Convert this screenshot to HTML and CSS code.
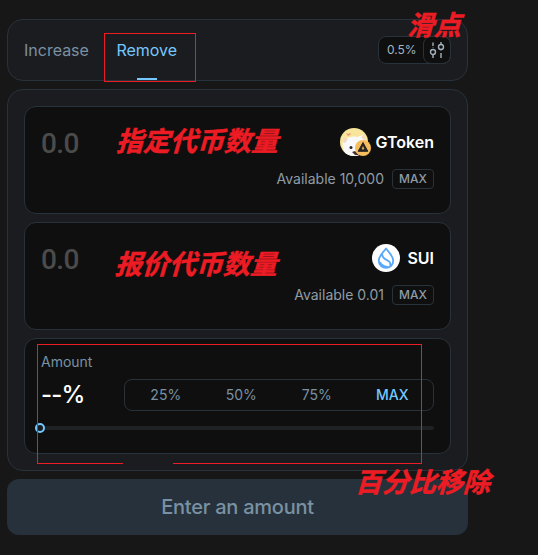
FILE: index.html
```html
<!DOCTYPE html>
<html lang="en">
<head>
<meta charset="utf-8">
<title>Remove liquidity</title>
<link rel="stylesheet" href="styles.css">
</head>
<body>
<main class="widget">
  <header class="tabs">
    <nav class="tab-list">
      <span class="tab">Increase</span>
      <span class="tab active">Remove</span>
    </nav>
    <div class="slippage">
      <span class="slippage-value">0.5%</span>
      <span class="slippage-button">
        <svg width="16" height="16" viewBox="0 0 16 16" fill="none" stroke="#a3b1bc" stroke-width="1.4"><path d="M4 0.500v3.500M4 13v3M12 0v2M12 11v5"/><circle cx="4" cy="10" r="2.5"/><circle cx="12" cy="5" r="2.5"/><path d="M4 5v1M12 8v1" stroke-opacity=".4"/></svg>
      </span>
    </div>
  </header>

  <section class="panel">
    <div class="card">
      <div class="row">
        <span class="value">0.0</span>
        <div class="token gtoken">
          <svg width="31" height="28" viewBox="0 0 31 28">
            <defs><clipPath id="face"><circle cx="14" cy="14" r="14"/></clipPath></defs>
            <g clip-path="url(#face)">
              <rect width="28" height="28" fill="#f6e59b"/>
              <path d="M3 20c-1-5 0-9 3-9 3-2 7-3 11-2l6-2 2 6 3 3v12H6z" fill="#f9f9fa"/>
              <path d="M3 14l1-4 4 1-3 4zM21 9l3-2 1 6z" fill="#f3d6c8"/>
              <path d="M6 5l2 1 3-1-1 2-2 1z" fill="#ec927d"/>
              <circle cx="11" cy="19.500" r="1.500" fill="#292426"/>
              <path d="M12 24l3 3h4l-4-4z" fill="#4d302b"/>
            </g>
            <circle cx="23" cy="20" r="8" fill="#f6bd5c"/>
            <path d="M23 14.500l4.800 8.800h-9.600z" fill="#242424" stroke="#242424" stroke-linejoin="round"/>
            <path d="M23 18l1.300 2.500-1.300 1.500-1.300-1.500z" fill="#d9a64f"/>
          </svg>
          <span>GToken</span>
        </div>
      </div>
      <div class="balance"><span>Available 10,000</span><span class="max">MAX</span></div>
    </div>

    <div class="card">
      <div class="row">
        <span class="value">0.0</span>
        <div class="token sui">
          <svg width="28" height="28" viewBox="0 0 28 28" fill="none"><circle cx="14" cy="14" r="14" fill="#fff"/><path d="M14 4.500c-3 4-7.200 7.400-7.200 12.200a7.200 7.200 0 0 0 14.400 0C21.200 11.900 17 8.500 14 4.500zM10.300 10.200c-.4 7.300 9.800 4.200 7.800 12.300M8 18c1.400 3.500 4.500 4.700 8.500 5" stroke="#59a8fa" stroke-width="1.8" stroke-linejoin="round"/></svg>
          <span>SUI</span>
        </div>
      </div>
      <div class="balance"><span>Available 0.01</span><span class="max">MAX</span></div>
    </div>

    <div class="card amount">
      <div class="amount-label">Amount</div>
      <div class="amount-row">
        <span class="percent">--%</span>
        <div class="presets"><span>25%</span><span>50%</span><span>75%</span><span class="chosen">MAX</span></div>
      </div>
      <div class="slider"><span class="thumb"></span></div>
    </div>
  </section>

  <div class="submit">Enter an amount</div>
</main>

<div class="frame frame-tab"></div>
<div class="frame frame-amount"></div>
<div class="frame-gap"></div>
<div class="note note-slippage">滑点</div>
<div class="note note-base">指定代币数量</div>
<div class="note note-quote">报价代币数量</div>
<div class="note note-percent">百分比移除</div>
</body>
</html>
```
FILE: styles.css
```css
* { box-sizing: border-box; }
body {
  margin: 0;
  height: 555px;
  position: relative;
  overflow: hidden;
  background: #171717;
  color: #fff;
  font-family: Inter, "Liberation Sans", sans-serif;
}
svg { display: block; flex: none; }
.widget {
  width: 461px;
  margin-left: 7px;
  padding-top: 19px;
  display: flex;
  flex-direction: column;
  gap: 8px;
}
.tabs {
  height: 62px;
  padding: 0 16px;
  display: flex;
  justify-content: space-between;
  align-items: center;
  border: 1px solid #28323a;
  border-radius: 16px;
  background: #1b1c20;
}
.tab-list { display: flex; gap: 27.5px; height: 60px; }
.tab {
  display: flex;
  align-items: center;
  font-size: 16px;
  color: #7991a3;
  position: relative;
}
.tab.active { color: #75c8ff; }
.tab.active::after {
  content: "";
  position: absolute;
  bottom: 0;
  left: 50%;
  width: 20px;
  height: 2px;
  margin-left: -9.5px;
  background: #75c8ff;
}
.slippage {
  display: flex;
  width: 73px;
  height: 28px;
  border: 1px solid #28323a;
  border-radius: 8px;
  background: #0f0f0f;
}
.slippage-value {
  flex: 1;
  padding-left: 8px;
  line-height: 26px;
  font-size: 12px;
  color: #a3b5c4;
}
.slippage-button {
  width: 28px;
  height: 28px;
  margin: -1px;
  display: flex;
  align-items: center;
  justify-content: center;
  border: 1px solid #28323a;
  border-radius: 8px;
}
.panel {
  display: flex;
  flex-direction: column;
  gap: 8px;
  padding: 16px;
  border: 1px solid #28323a;
  border-radius: 16px;
  background: #1b1c20;
}
.card {
  height: 108px;
  padding: 16px;
  border: 1px solid #28323a;
  border-radius: 12px;
  background: #0f0f0f;
}
.row {
  height: 38px;
  display: flex;
  align-items: center;
  justify-content: space-between;
}
.value {
  padding-top: 2px;
  font: 500 28px Roboto, sans-serif;
  letter-spacing: -0.6px;
  color: #4b4b4b;
}
.token {
  display: flex;
  align-items: center;
  font-size: 16px;
  font-weight: 600;
}
.gtoken { gap: 4px; }
.sui { gap: 7px; }
.balance {
  display: flex;
  align-items: center;
  justify-content: flex-end;
  gap: 8px;
  margin-top: 8px;
  height: 20px;
  line-height: 20px;
  font-size: 14px;
  color: #909ca6;
}
.max {
  width: 42px;
  height: 20px;
  line-height: 18px;
  text-align: center;
  border: 1px solid #28323a;
  border-radius: 4px;
  font-size: 12px;
  font-weight: 500;
}
.amount { height: 116px; }
.amount-label {
  height: 16px;
  line-height: 14px;
  font-size: 14px;
  color: #7991a3;
}
.amount-row {
  display: flex;
  align-items: center;
  justify-content: space-between;
  height: 32px;
  margin-top: 8px;
}
.percent {
  font: 500 24px/30px Inter, sans-serif;
  letter-spacing: -0.9px;
}
.presets {
  width: 310px;
  height: 32px;
  display: grid;
  grid-template-columns: repeat(4, 1fr);
  padding: 0 3px;
  line-height: 29px;
  text-align: center;
  border: 1px solid #28323a;
  border-radius: 8px;
  font-size: 14px;
  color: #7991a3;
}
.chosen { color: #75c8ff; font-weight: 500; }
.slider {
  position: relative;
  height: 4px;
  margin-top: 15px;
  border-radius: 2px;
  background: #202123;
}
.thumb {
  position: absolute;
  left: -6px;
  top: -3px;
  width: 10px;
  height: 10px;
  border: 2px solid #75c8ff;
  border-radius: 50%;
  background: #1b1c20;
}
.submit {
  height: 56px;
  line-height: 56px;
  text-align: center;
  border-radius: 12px;
  background: #27313b;
  font-size: 20px;
  font-weight: 500;
  letter-spacing: -0.25px;
  color: #7991a3;
}

/* Review annotations laid over the form */
.frame { position: absolute; border: 1px solid #ed1c24; }
.frame-tab { left: 104px; top: 33px; width: 92px; height: 49px; }
.frame-amount { left: 37px; top: 344px; width: 385px; height: 120px; }
.frame-gap {
  position: absolute;
  left: 123px;
  top: 463px;
  width: 50px;
  height: 1px;
  background: #1b1c20;
}
.note {
  position: absolute;
  font: 700 27px/40px "Noto Sans CJK SC", sans-serif;
  color: #ed1c24;
  -webkit-text-stroke: 0.5px #ed1c24;
  white-space: nowrap;
  transform: skewX(-16deg);
}
.note-slippage { left: 410px; top: 4px; }
.note-base { left: 119px; top: 120px; }
.note-quote { left: 118px; top: 243px; }
.note-percent { left: 358px; top: 461px; }
```
